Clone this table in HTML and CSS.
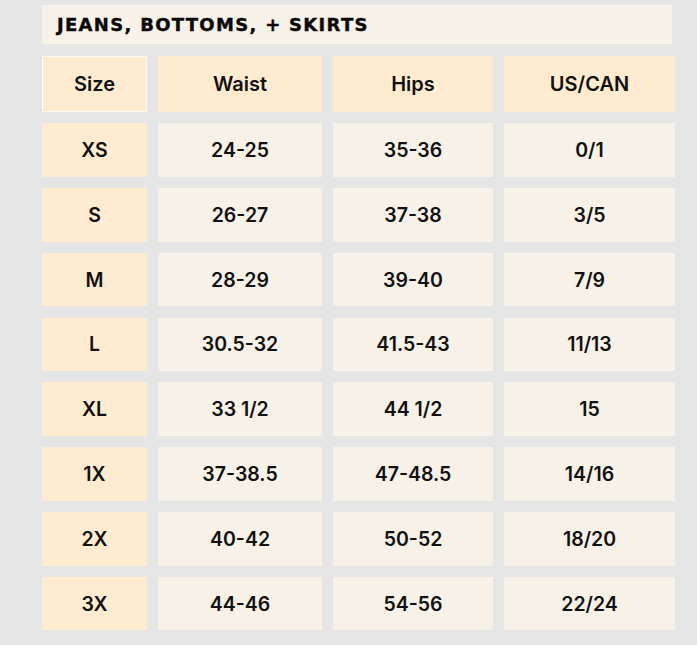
FILE: index.html
```html
<!DOCTYPE html>
<html lang="en">
<head>
<meta charset="utf-8">
<title>Jeans, Bottoms, + Skirts Size Chart</title>
<link rel="stylesheet" href="styles.css">
</head>
<body>
<div class="page">
  <div class="title">JEANS, BOTTOMS, + SKIRTS</div>
  <div class="chart">
    <div class="cell head size-head">Size</div>
    <div class="cell head">Waist</div>
    <div class="cell head">Hips</div>
    <div class="cell head">US/CAN</div>

    <div class="cell size">XS</div><div class="cell">24-25</div><div class="cell">35-36</div><div class="cell">0/1</div>
    <div class="cell size">S</div><div class="cell">26-27</div><div class="cell">37-38</div><div class="cell">3/5</div>
    <div class="cell size">M</div><div class="cell">28-29</div><div class="cell">39-40</div><div class="cell">7/9</div>
    <div class="cell size">L</div><div class="cell">30.5-32</div><div class="cell">41.5-43</div><div class="cell">11/13</div>
    <div class="cell size">XL</div><div class="cell">33 1/2</div><div class="cell">44 1/2</div><div class="cell">15</div>
    <div class="cell size">1X</div><div class="cell">37-38.5</div><div class="cell">47-48.5</div><div class="cell">14/16</div>
    <div class="cell size">2X</div><div class="cell">40-42</div><div class="cell">50-52</div><div class="cell">18/20</div>
    <div class="cell size">3X</div><div class="cell">44-46</div><div class="cell">54-56</div><div class="cell">22/24</div>
  </div>
</div>
</body>
</html>
```
FILE: styles.css
```css
html, body {
  margin: 0;
  padding: 0;
  background: #e5e5e5;
}
.page {
  padding: 5px 0 0 42px;
  font-family: Inter, "Noto Sans", sans-serif;
  color: #111;
}
.title {
  width: 630px;
  height: 39px;
  box-sizing: border-box;
  background: #f8f1e8;
  padding-left: 15px;
  padding-bottom: 1px;
  display: flex;
  align-items: center;
  font-family: "DejaVu Sans", sans-serif;
  font-weight: 900;
  font-size: 18px;
  letter-spacing: 1.3px;
  -webkit-text-stroke: 0.4px #0a0a0a;
  color: #0a0a0a;
}
.chart {
  margin-top: 12px;
  display: grid;
  grid-template-columns: 105px 164px 160px 171px;
  grid-template-rows: 56px repeat(8, 53.5px);
  column-gap: 11px;
  row-gap: 11.3px;
}
.cell {
  background: #f8f1e8;
  display: flex;
  align-items: center;
  justify-content: center;
  font-size: 19.5px;
  font-weight: 600;
  color: #111;
}
.head, .size {
  background: #ffebd0;
}
.head {
  font-size: 20px;
  padding-bottom: 1px;
}
.size-head {
  border: 1px solid #fffaf3;
}
```
